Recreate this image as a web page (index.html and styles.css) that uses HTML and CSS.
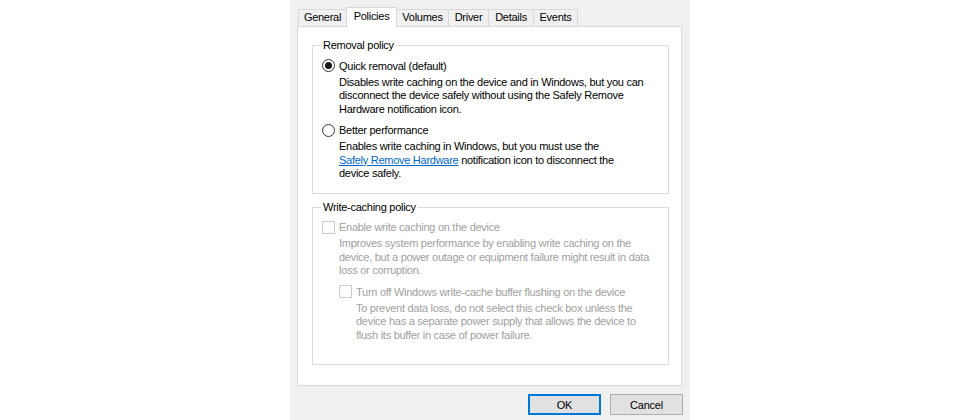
FILE: index.html
```html
<!DOCTYPE html>
<html>
<head>
<meta charset="utf-8">
<link rel="stylesheet" href="styles.css">
</head>
<body>
<div class="dialog">
  <div class="tabs">
    <div class="tab t-general">General</div>
    <div class="tab active t-policies">Policies</div>
    <div class="tab t-volumes">Volumes</div>
    <div class="tab t-driver">Driver</div>
    <div class="tab t-details">Details</div>
    <div class="tab t-events">Events</div>
  </div>
  <div class="panel">
    <fieldset class="group group-removal">
      <legend>Removal policy</legend>
      <div class="option">
        <span class="radio checked"></span>
        <span>Quick removal (default)</span>
      </div>
      <div class="desc">Disables write caching on the device and in Windows, but you can<br>disconnect the device safely without using the Safely Remove<br>Hardware notification icon.</div>
      <div class="option option-second">
        <span class="radio"></span>
        <span>Better performance</span>
      </div>
      <div class="desc">Enables write caching in Windows, but you must use the<br><a class="link" href="#">Safely Remove Hardware</a> notification icon to disconnect the<br>device safely.</div>
    </fieldset>
    <fieldset class="group group-cache disabled">
      <legend>Write-caching policy</legend>
      <div class="option">
        <span class="check"></span>
        <span>Enable write caching on the device</span>
      </div>
      <div class="desc">Improves system performance by enabling write caching on the<br>device, but a power outage or equipment failure might result in data<br>loss or corruption.</div>
      <div class="sub">
        <div class="option option-sub">
          <span class="check"></span>
          <span>Turn off Windows write-cache buffer flushing on the device</span>
        </div>
        <div class="desc">To prevent data loss, do not select this check box unless the<br>device has a separate power supply that allows the device to<br>flush its buffer in case of power failure.</div>
      </div>
    </fieldset>
  </div>
  <div class="buttons">
    <button class="btn btn-default">OK</button>
    <button class="btn">Cancel</button>
  </div>
</div>
</body>
</html>
```

FILE: styles.css
```css
html, body {
  margin: 0;
  padding: 0;
  background: #ffffff;
}
body {
  display: flex;
  justify-content: center;
  font-family: "Liberation Sans", Arial, sans-serif;
  font-size: 11px;
  letter-spacing: -0.27px;
  color: #000;
}
.dialog {
  width: 400px;
  height: 420px;
  box-sizing: border-box;
  background: #f0f0f0;
  padding: 7px 7px 0 7px;
  white-space: nowrap;
}
.tabs {
  display: flex;
  height: 19px;
  padding-left: 1px;
  align-items: flex-end;
}
.tab {
  box-sizing: border-box;
  height: 17px;
  line-height: 15px;
  border: 1px solid #d9d9d9;
  border-bottom: none;
  background: #f0f0f0;
  padding: 0;
  margin-left: -1px;
  text-align: center;
}
.tab:first-child { margin-left: 0; }
.tab.active {
  height: 20px;
  margin-bottom: -1px;
  background: #fff;
  position: relative;
  z-index: 1;
  line-height: 16px;
  padding-bottom: 2px;
}
.t-general { width: 49px; }
.t-policies { width: 51px; }
.t-volumes { width: 53px; }
.t-driver { width: 41px; }
.t-details { width: 46px; }
.t-events { width: 45px; }

.panel {
  box-sizing: border-box;
  width: 385px;
  height: 360px;
  background: #fff;
  border: 1px solid #d9d9d9;
  padding: 12px 12px 0 14px;
}
.group {
  margin: 0;
  border: 1px solid #dcdcdc;
  padding: 0 8px 0 9px;
  min-width: 0;
}
.group legend {
  padding: 0 2px;
  margin-left: -1px;
  line-height: 13.5px;
}
.group-removal {
  padding-bottom: 12px;
}
.group-cache {
  margin-top: 7px;
  padding-bottom: 22px;
}
.option {
  display: flex;
  align-items: center;
  gap: 4px;
  line-height: 14px;
  margin-top: 6px;
}
.option-second {
  margin-top: 7px;
}
.desc {
  margin-left: 17px;
  line-height: 13.5px;
  margin-top: 3px;
}
.radio {
  box-sizing: border-box;
  width: 13px;
  height: 13px;
  border: 1px solid #333;
  border-radius: 50%;
  background: #fff;
  position: relative;
  flex: none;
}
.radio.checked::after {
  content: "";
  position: absolute;
  left: 2px;
  top: 2px;
  width: 7px;
  height: 7px;
  border-radius: 50%;
  background: #1a1a1a;
}
.check {
  box-sizing: border-box;
  width: 13px;
  height: 13px;
  border: 1px solid #cccccc;
  background: #fff;
  flex: none;
}
.disabled .option,
.disabled .desc {
  color: #a0a0a0;
}
.sub {
  margin-left: 17px;
}
.option-sub {
  margin-top: 7px;
}
.link {
  color: #0066cc;
  text-decoration: underline;
}
.buttons {
  display: flex;
  justify-content: flex-end;
  gap: 9px;
  margin-top: 8px;
}
.btn {
  box-sizing: border-box;
  width: 73px;
  height: 21px;
  background: #e1e1e1;
  border: 1px solid #adadad;
  font-family: "Liberation Sans", Arial, sans-serif;
  font-size: 11px;
  letter-spacing: -0.2px;
  color: #000;
  padding: 0;
  margin: 0;
}
.btn-default {
  border: 2px solid #0078d7;
}
```
